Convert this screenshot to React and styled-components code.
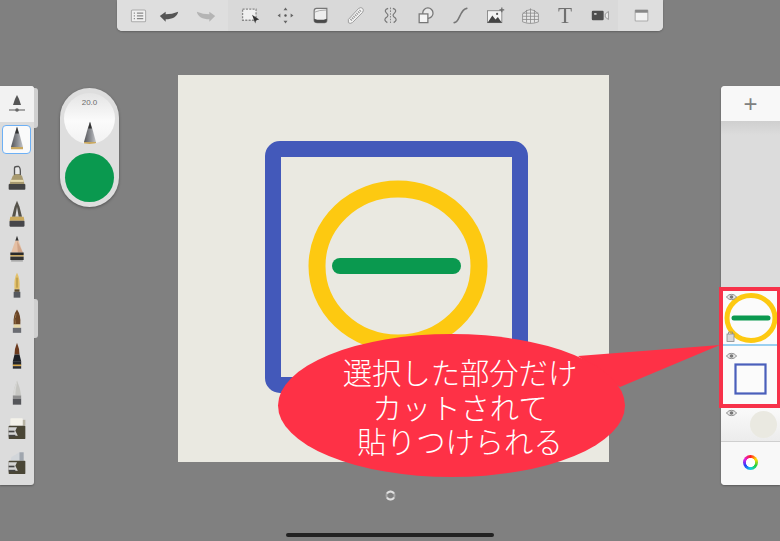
import React from "react";
import styled, { createGlobalStyle } from "styled-components";

const GlobalStyle = createGlobalStyle`
  html, body {
    margin: 0;
    padding: 0;
    background: #808080;
  }
`;

const Page = styled.div`
  position: relative;
  width: 780px;
  height: 541px;
  overflow: hidden;
  background: #808080;
  font-family: "Liberation Sans", sans-serif;
`;

const Toolbar = styled.div`
  display: flex;
  width: 546px;
  height: 31px;
  margin: 0 0 44px 117px;
  border-radius: 0 0 5px 5px;
  background: #dadada;
  box-shadow: 0 1px 2px rgba(0, 0, 0, 0.25);
  overflow: hidden;
`;

const ToolGroup = styled.div`
  display: flex;
  flex: ${(p) => (p.$grow ? 1 : "none")};
  align-items: center;
  padding: ${(p) => p.$pad || "0"};
  background: ${(p) => (p.$side ? "#dedede" : "#d9d9d9")};
`;

const ToolSlot = styled.div`
  display: flex;
  align-items: center;
  justify-content: center;
  width: ${(p) => p.$w || 35}px;
  height: 31px;
  filter: blur(0.4px);
`;

const TextTool = styled.span`
  font-family: "Liberation Serif", serif;
  font-size: 23px;
  line-height: 24px;
  color: #707070;
`;

const Workspace = styled.div`
  display: flex;
  align-items: flex-start;
`;

const LeftRail = styled.div`
  position: relative;
  display: flex;
  flex-direction: column;
  width: 34px;
  height: 399px;
  margin-top: 11px;
  border-radius: 0 3px 3px 0;
  background: #dcdcdc;
  box-shadow: 0 1px 2px rgba(0, 0, 0, 0.3);
`;

const RailHead = styled.div`
  display: flex;
  align-items: center;
  justify-content: center;
  height: 36px;
  background: #f2f2f2;
  border-radius: 0 3px 0 0;
  filter: blur(0.3px);
`;

const RailTab = styled.div`
  position: absolute;
  left: 34px;
  top: ${(p) => p.$top}px;
  width: 4px;
  height: ${(p) => p.$h}px;
  border-radius: 0 3px 3px 0;
  background: #d0d0d0;
`;

const NibSlot = styled.div`
  display: flex;
  align-items: center;
  justify-content: center;
  height: 35.7px;
  margin-top: ${(p) => (p.$first ? 7 : 0)}px;
`;

const SelectedNib = styled.div`
  display: flex;
  align-items: center;
  justify-content: center;
  box-sizing: border-box;
  width: 29px;
  height: 29px;
  margin: 3px 0 0 2px;
  border: 1.5px solid #6db0f5;
  border-radius: 4px;
  background: #fafafa;
`;

const NibSvg = styled.svg`
  display: block;
  filter: blur(0.4px);
`;

const Puck = styled.div`
  display: flex;
  flex-direction: column;
  align-items: center;
  box-sizing: border-box;
  width: 59px;
  height: 119px;
  margin: 13px 0 0 26px;
  padding-top: 5px;
  border-radius: 30px;
  background: #dedede;
  box-shadow: 0 1px 3px rgba(0, 0, 0, 0.35);
`;

const SizeDial = styled.div`
  position: relative;
  display: flex;
  flex-direction: column;
  align-items: center;
  width: 51px;
  height: 51px;
  border-radius: 50%;
  background: linear-gradient(#e4e4e4, #fbfbfb 55%, #f2f2f2);
  overflow: hidden;
`;

const SizeLabel = styled.span`
  margin-top: 5px;
  font-size: 8px;
  line-height: 9px;
  color: #6c6c6c;
`;

const DialNib = styled.div`
  position: absolute;
  bottom: -4px;
  left: 16.5px;
`;

const ColorDot = styled.div`
  width: 49px;
  height: 49px;
  margin-top: 9px;
  border-radius: 50%;
  background: #0a994f;
`;

const CanvasColumn = styled.div`
  display: flex;
  flex-direction: column;
  align-items: center;
  margin-left: 59px;
`;

const Canvas = styled.div`
  width: 431px;
  height: 387px;
  background: #eae9e1;
`;

const DrawingSvg = styled.svg`
  display: block;
`;

const SyncMark = styled.svg`
  display: block;
  margin: 28px 7px 0 0;
  filter: blur(0.3px);
`;

const RightRail = styled.div`
  position: relative;
  display: flex;
  flex-direction: column;
  width: 59px;
  height: 399px;
  margin: 11px 0 0 auto;
  border-radius: 4px 0 0 4px;
  background: #dcdcdc;
  box-shadow: 0 1px 2px rgba(0, 0, 0, 0.3);
`;

const AddLayer = styled.div`
  display: flex;
  align-items: center;
  justify-content: center;
  height: 35px;
  border-radius: 4px 0 0 0;
  background: #f8f8f8;
  font-size: 24px;
  color: #808080;
`;

const EmptyLayers = styled.div`
  height: 170px;
  background: linear-gradient(#cfcfcf, #dcdcdc 14px);
`;

const Layer = styled.div`
  position: relative;
  display: flex;
  align-items: center;
  justify-content: ${(p) => p.$justify || "center"};
  box-sizing: border-box;
  height: ${(p) => p.$h}px;
  padding: ${(p) => p.$pad || "0"};
  background: ${(p) => p.$bg || "#fbfbfb"};
  border-bottom: ${(p) => (p.$active ? "2px solid #9bd0f0" : "none")};
`;

const LayerEye = styled.div`
  position: absolute;
  left: 5px;
  top: ${(p) => p.$top}px;
  display: flex;
  filter: blur(0.3px);
`;

const LayerBadge = styled.div`
  position: absolute;
  left: 5px;
  bottom: 2px;
  display: flex;
  filter: blur(0.3px);
`;

const PaperDot = styled.div`
  width: 27px;
  height: 27px;
  border-radius: 50%;
  background: #eae9e1;
`;

const ColorRow = styled.div`
  display: flex;
  flex: 1;
  align-items: center;
  justify-content: center;
  padding-bottom: 3px;
  background: #f8f8f8;
  border-top: 1px solid #cfcfcf;
  border-radius: 0 0 0 4px;
`;

const ColorWheel = styled.div`
  width: 15px;
  height: 15px;
  border-radius: 50%;
  background: radial-gradient(circle, #fff 0 4.3px, transparent 4.8px),
    conic-gradient(#ff2020, #ffe000, #20d040, #10d0e0, #2040ff, #e020e0, #ff2020);
`;

const LayerFrame = styled.div`
  position: absolute;
  left: -2px;
  right: 0;
  top: 201px;
  height: 121px;
  box-sizing: border-box;
  border: 4px solid #f7324a;
  border-right-width: 3px;
  pointer-events: none;
`;

const CalloutShape = styled.svg`
  position: absolute;
  left: 270px;
  top: 330px;
`;

const CalloutText = styled.div`
  position: absolute;
  left: 300px;
  top: 354px;
  width: 320px;
  font-family: "Noto Sans CJK JP", sans-serif;
  font-size: 29.3px;
  font-weight: 300;
  line-height: 34.5px;
  text-align: center;
  color: #fff;
`;

const HomeBar = styled.div`
  position: absolute;
  left: 286px;
  top: 533px;
  width: 208px;
  height: 4px;
  border-radius: 2px;
  background: #222;
`;

const Ico = ({ children, w = 19, h = 19 }) => (
  <svg width={w} height={h} viewBox="0 0 24 24" fill="none">
    {children}
  </svg>
);

const Eye = () => (
  <svg width="11" height="8" viewBox="0 0 11 8" fill="none">
    <path d="M0.5 4 C3 0.5 8 0.5 10.5 4 C8 7.5 3 7.5 0.5 4Z" fill="#e8e8e8" stroke="#8a8a8a" />
    <circle cx="5.5" cy="4" r="1.8" fill="#777" />
  </svg>
);

const nibs = {
  pen: (
    <>
      <path d="M12 1 L15 10 L20 28 H4 L9 10 Z" fill="url(#steel)" />
      <path d="M12 1 L14.5 10 H9.5 Z" fill="#333" />
      <rect x="4" y="28" width="16" height="3" fill="#c9a860" />
    </>
  ),
  bell: (
    <>
      <path d="M9 9 V5 Q9 3 12 3 H14 Q16 4 16 9 V13 H9 Z" fill="#e8e8e8" stroke="#555" strokeWidth="1.6" />
      <path d="M7 14 Q12 10 18 14 L21 24 H3 Z" fill="#a89a70" />
      <rect x="4" y="19" width="16" height="2.5" fill="#e8dcb0" />
      <rect x="2" y="24" width="20" height="7" rx="1" fill="#444" />
    </>
  ),
  cone: (
    <>
      <path d="M12 1 L15 8 L18 20 H6 L9 8 Z" fill="#55524a" />
      <path d="M12 8 L14 20 H10 Z" fill="#ddd" />
      <path d="M4 20 H20 L21 25 H3 Z" fill="#caa95c" />
      <rect x="3" y="25" width="18" height="7" rx="1" fill="#46464a" />
    </>
  ),
  pencil: (
    <>
      <path d="M12 1 L14 7 H10 Z" fill="#333" />
      <path d="M10 7 H14 L19 21 H5 Z" fill="#e4bfa4" />
      <path d="M12 7 L19 21 H13 Z" fill="#d0a488" />
      <rect x="4" y="21" width="16" height="3" fill="#2a2a2a" />
      <rect x="4" y="24" width="16" height="2" fill="#c9a860" />
      <rect x="4" y="26" width="16" height="4" fill="#333" />
      <rect x="5" y="30" width="14" height="2" fill="#aaa" />
    </>
  ),
  fountain: (
    <>
      <path d="M12 2 Q16 9 15 22 H9 Q8 9 12 2Z" fill="#e2c06a" />
      <path d="M12 8 V20" stroke="#8a6a20" strokeWidth="0.8" />
      <rect x="9" y="22" width="6" height="3" fill="#5a4a2a" />
      <rect x="8" y="25" width="8" height="7" fill="#55585e" />
    </>
  ),
  brush: (
    <>
      <path d="M12 3 Q17 10 16 21 H8 Q7 10 12 3Z" fill="#6a4526" />
      <path d="M11 8 Q9 14 10 20" stroke="#a98252" strokeWidth="1" />
      <rect x="8" y="21" width="8" height="4" fill="#e8d8a8" />
      <rect x="7" y="25" width="10" height="6" fill="#6a6c72" />
    </>
  ),
  inkBrush: (
    <>
      <path d="M12 1 Q15 8 15 15 H9 Q9 8 12 1Z" fill="#6b3a1e" />
      <path d="M9 15 H15 L17 23 H7 Z" fill="#1d2026" />
      <rect x="7" y="23" width="10" height="5" fill="#23262c" />
      <rect x="7" y="27" width="10" height="2" fill="#d9a94a" />
      <rect x="7" y="29" width="10" height="3" fill="#2a2c30" />
    </>
  ),
  marker: (
    <>
      <path d="M12 3 Q16 12 17 21 H7 Q8 12 12 3Z" fill="#c6c6c2" />
      <path d="M12 6 Q10 14 10 21 H7 Q8 12 12 3Z" fill="#d8d8d6" />
      <rect x="7" y="21" width="10" height="4" fill="#8e8e8e" />
      <rect x="7" y="25" width="10" height="7" fill="#55565a" />
    </>
  ),
  eraser: (
    <>
      <rect x="4" y="5" width="15" height="9" rx="1" fill="#f4f2ea" />
      <rect x="19" y="7" width="3" height="7" fill="#b8b4a4" />
      <rect x="2" y="14" width="20" height="16" rx="1" fill="#4a4636" />
      <path d="M2 16 H12 L10 20 L13 26 H2 Z" fill="#d4d4d4" />
      <rect x="2" y="20" width="7" height="2" fill="#444" />
      <rect x="2" y="25" width="8" height="2" fill="#444" />
    </>
  ),
  eraserSoft: (
    <>
      <path d="M5 10 L15 4 H20 V14 H5 Z" fill="#d2d6da" />
      <path d="M15 4 H20 V14 H15 Z" fill="#a0a6ae" />
      <rect x="2" y="14" width="20" height="16" rx="1" fill="#4a4636" />
      <path d="M2 16 H12 L10 20 L13 26 H2 Z" fill="#d4d4d4" />
      <rect x="2" y="20" width="7" height="2" fill="#444" />
      <rect x="2" y="25" width="8" height="2" fill="#444" />
    </>
  ),
};

const Nib = ({ kind, size = 24 }) => (
  <NibSvg width={size} height={size * 1.5} viewBox="0 0 24 36">
    <defs>
      <linearGradient id="steel" x1="0" x2="1" y1="0" y2="0">
        <stop offset="0" stopColor="#55565a" />
        <stop offset="0.55" stopColor="#8d8f94" />
        <stop offset="1" stopColor="#c4c5c8" />
      </linearGradient>
    </defs>
    {nibs[kind]}
  </NibSvg>
);

const railNibs = ["bell", "cone", "pencil", "fountain", "brush", "inkBrush", "marker", "eraser", "eraserSoft"];

const ToolIcons = [
  <Ico key="sel">
    <rect x="2" y="4" width="17" height="14" fill="#f0f0f0" stroke="#888" strokeWidth="1.6" strokeDasharray="2.6 1.6" />
    <path d="M14 11 L23 17 L19 18 L18 22 Z" fill="#333" />
  </Ico>,
  <Ico key="move">
    <circle cx="12" cy="12" r="1.5" fill="#555" />
    <path d="M12 2 L14.5 5.5 H9.5 Z M12 22 L14.5 18.5 H9.5 Z M2 12 L5.5 9.5 V14.5 Z M22 12 L18.5 9.5 V14.5 Z" fill="#666" />
  </Ico>,
  <Ico key="stencil">
    <path d="M4 6 Q4 3 7 3 H20 V18 Q20 21 17 21 H8 Q4 21 4 18 Z" fill="#eeeeee" stroke="#777" strokeWidth="1.5" />
    <path d="M4 16 Q12 19 20 16 V18 Q20 21 17 21 H8 Q4 21 4 18 Z" fill="#4a4a4a" />
    <path d="M4 8 Q10 5 20 5" stroke="#999" />
  </Ico>,
  <Ico key="ruler">
    <path d="M3 17 L16 3 Q19 1 21 3 Q23 5 21 8 L8 21 Q5 23 3 21 Z" fill="#f4f4f4" stroke="#999" strokeWidth="1.2" />
    <path d="M6 18 L19 5" stroke="#999" strokeWidth="3" strokeDasharray="1.5 1.2" />
  </Ico>,
  <Ico key="sym">
    <path d="M12 2 V22" stroke="#888" strokeWidth="1.3" strokeDasharray="2 1.5" />
    <path d="M9 3 Q3 5 7 9 Q11 12 6 15 Q3 18 8 21" stroke="#777" strokeWidth="1.5" />
    <path d="M15 3 Q21 5 17 9 Q13 12 18 15 Q21 18 16 21" stroke="#777" strokeWidth="1.5" />
  </Ico>,
  <Ico key="shape">
    <circle cx="15" cy="9" r="6.5" fill="#e8e8e8" stroke="#777" strokeWidth="1.6" />
    <rect x="4" y="10" width="11" height="11" fill="#f4f4f4" stroke="#777" strokeWidth="1.6" />
  </Ico>,
  <Ico key="curve">
    <path d="M4 21 C11 21 11 4 20 3" stroke="#777" strokeWidth="2" strokeLinecap="round" />
  </Ico>,
  <Ico key="image">
    <rect x="2" y="6" width="18" height="15" fill="#f2f2f2" stroke="#777" />
    <path d="M2 21 L8 12 L12 17 L15 14 L20 21 Z" fill="#444" />
    <circle cx="14" cy="10" r="1.4" fill="#555" />
    <path d="M20 2 V8 M17 5 H23" stroke="#666" strokeWidth="1.5" />
  </Ico>,
  <Ico key="persp">
    <path d="M2 20 V10 Q12 -1 22 10 V20 Q12 24 2 20 Z" fill="#e6e6e6" stroke="#888" />
    <path d="M2 13 H22 M2 9 H22 M2 17 H22 M12 3 V22 M7 5 V21 M17 5 V21" stroke="#888" strokeWidth="1" />
  </Ico>,
  <TextTool key="text">T</TextTool>,
  <Ico key="video">
    <rect x="1" y="6" width="15" height="12" rx="1.5" fill="#4f4f4f" />
    <rect x="4" y="9" width="3" height="2" fill="#ddd" />
    <path d="M18 10 L22 7 V17 L18 14 Z" fill="#eee" stroke="#888" />
  </Ico>,
];

const App = () => (
  <Page>
    <GlobalStyle />
    <Toolbar>
      <ToolGroup $side $pad="0 0 0 5px">
        <ToolSlot $w={32}>
          <Ico>
            <rect x="3" y="5" width="18" height="15" rx="1.5" fill="#f0f0f0" stroke="#aaa" strokeWidth="1.3" />
            <path d="M6 9 H7.5 M6 12.5 H7.5 M6 16 H7.5 M10 9 H18 M10 12.5 H18 M10 16 H18" stroke="#888" strokeWidth="1.4" />
          </Ico>
        </ToolSlot>
        <ToolSlot $w={30}>
          <Ico w={20} h={20}>
            <path d="M1 12 L8 7 V10 C13 10 18 9 23 7 C22 13 16 16 8 16 V19 Z" fill="#555" />
          </Ico>
        </ToolSlot>
        <ToolSlot $w={44}>
          <Ico w={20} h={20}>
            <path d="M23 12 L16 7 V10 C11 10 6 9 1 7 C2 13 8 16 16 16 V19 Z" fill="#b4b4b4" />
          </Ico>
        </ToolSlot>
      </ToolGroup>
      <ToolGroup $pad="0 0 0 4.5px">
        {ToolIcons.map((icon) => (
          <ToolSlot key={icon.key}>{icon}</ToolSlot>
        ))}
      </ToolGroup>
      <ToolGroup $side $grow $pad="0 0 0 2.5px">
        <ToolSlot $w={42}>
          <Ico>
            <rect x="4" y="5" width="16" height="14" rx="1" fill="#f2f2f2" stroke="#aaa" strokeWidth="1.3" />
            <rect x="4" y="5" width="16" height="3.5" fill="#888" />
          </Ico>
        </ToolSlot>
      </ToolGroup>
    </Toolbar>

    <Workspace>
      <LeftRail>
        <RailHead>
          <svg width="20" height="22" viewBox="0 0 20 22" fill="none">
            <path d="M10 2 L12 6 L14 12 H6 L8 6 Z" fill="#555" />
            <path d="M2 17 H18" stroke="#666" strokeWidth="1.1" />
            <circle cx="10" cy="17" r="1.8" fill="#666" />
          </svg>
        </RailHead>
        <RailTab $top={2} $h={40} />
        <RailTab $top={213} $h={39} />
        <SelectedNib>
          <Nib kind="pen" size={18} />
        </SelectedNib>
        {railNibs.map((kind, i) => (
          <NibSlot key={kind} $first={i === 0}>
            <Nib kind={kind} size={20} />
          </NibSlot>
        ))}
      </LeftRail>

      <Puck>
        <SizeDial>
          <SizeLabel>20.0</SizeLabel>
          <DialNib>
            <Nib kind="pen" size={18} />
          </DialNib>
        </SizeDial>
        <ColorDot />
      </Puck>

      <CanvasColumn>
        <Canvas>
          <DrawingSvg width="431" height="387" viewBox="0 0 431 387" fill="none">
            <rect x="95" y="74" width="247" height="236" rx="7" stroke="#4359ba" strokeWidth="16" />
            <ellipse cx="220" cy="191" rx="81" ry="77" stroke="#fdc911" strokeWidth="17" />
            <path d="M162 191 H275" stroke="#0a994f" strokeWidth="16" strokeLinecap="round" />
          </DrawingSvg>
        </Canvas>
        <SyncMark width="11" height="11" viewBox="0 0 11 11" fill="none">
          <circle cx="5.5" cy="5.5" r="4" stroke="#a6a6a6" strokeWidth="2" />
          <path d="M2 3.5 A4 4 0 0 1 9 3.5" stroke="#e0e0e0" strokeWidth="2" />
          <path d="M2 7.5 A4 4 0 0 0 9 7.5" stroke="#e0e0e0" strokeWidth="2" />
        </SyncMark>
      </CanvasColumn>

      <RightRail>
        <AddLayer>+</AddLayer>
        <EmptyLayers />
        <Layer $h={55} $active>
          <LayerEye $top={2}>
            <Eye />
          </LayerEye>
          <svg width="56" height="52" viewBox="0 0 56 52" fill="none">
            <ellipse cx="28" cy="26" rx="24" ry="22.5" stroke="#fdc911" strokeWidth="5" />
            <path d="M11 26 H45" stroke="#0a994f" strokeWidth="5" strokeLinecap="round" />
          </svg>
          <LayerBadge>
            <svg width="9" height="11" viewBox="0 0 9 11" fill="none">
              <rect x="1" y="3" width="7" height="7.5" fill="#d8d8d8" stroke="#888" strokeWidth="0.8" />
              <path d="M2.5 3 V1 H6.5 V3" stroke="#888" strokeWidth="0.8" />
            </svg>
          </LayerBadge>
        </Layer>
        <Layer $h={62} $pad="4px 0 0 0">
          <LayerEye $top={6}>
            <Eye />
          </LayerEye>
          <svg width="35" height="34" viewBox="0 0 35 34" fill="none">
            <rect x="2.5" y="2.5" width="30" height="29" stroke="#4a5fbb" strokeWidth="2.2" />
          </svg>
        </Layer>
        <Layer $h={33} $justify="flex-end" $pad="0 3px 0 0" $bg="linear-gradient(#fafafa, #ececec)">
          <LayerEye $top={1}>
            <Eye />
          </LayerEye>
          <PaperDot />
        </Layer>
        <ColorRow>
          <ColorWheel />
        </ColorRow>
        <LayerFrame />
      </RightRail>
    </Workspace>

    <CalloutShape width="460" height="150" viewBox="0 0 460 150">
      <path d="M308 26 L450 15 L350 57 Z" fill="#fe3146" />
      <ellipse cx="181.5" cy="75.5" rx="173.5" ry="71.5" fill="#fe3146" />
    </CalloutShape>
    <CalloutText>
      選択した部分だけ
      <br />
      カットされて
      <br />
      貼りつけられる
    </CalloutText>
    <HomeBar />
  </Page>
);

export default App;
